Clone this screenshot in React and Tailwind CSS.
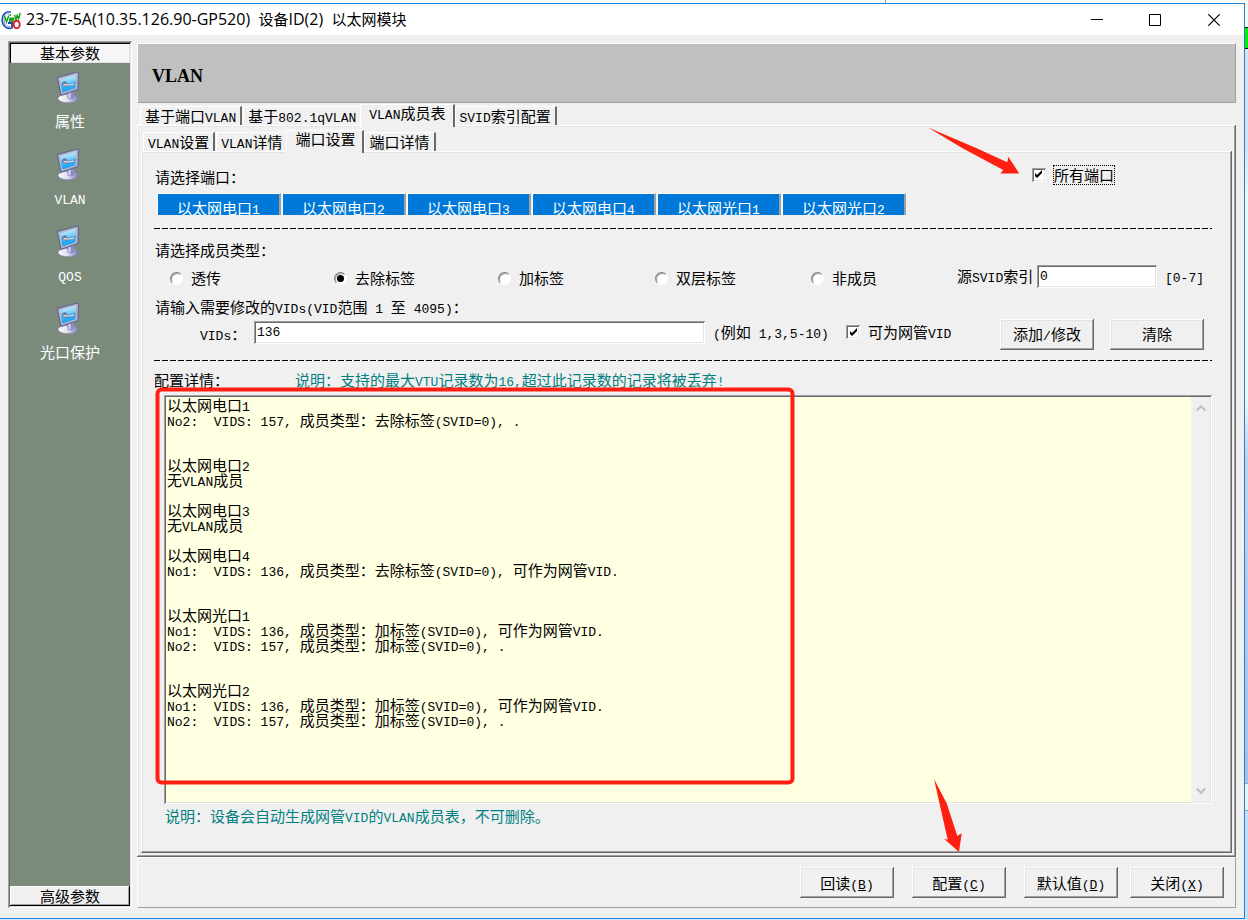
import React, { Fragment, useState } from "react";

/* Chinese glyphs are set at 15px; Latin runs use a narrower monospace size. */
function Mixed({ text, latin = "font-['Liberation_Mono',monospace] text-[13px] leading-none" }) {
  return (
    <>
      {text.split(/([\x20-\x7e]+)/).map((part, i) =>
        i % 2 ? (
          <span key={i} className={latin}>
            {part}
          </span>
        ) : (
          <Fragment key={i}>{part}</Fragment>
        )
      )}
    </>
  );
}

const raised =
  "bg-[#f0f0f0] shadow-[inset_-1px_-1px_#696969,inset_1px_1px_#fff,inset_-2px_-2px_#a0a0a0,inset_2px_2px_#e3e3e3]";
const sunken =
  "shadow-[inset_1px_1px_#a0a0a0,inset_-1px_-1px_#fff,inset_2px_2px_#696969,inset_-2px_-2px_#e3e3e3]";

function AppIcon() {
  return (
    <svg viewBox="0 0 20 20" className="h-5 w-5 shrink-0" fill="none" aria-hidden="true">
      <path d="M10 2.2C5 .6 1.2 4.500 1.200 10c0 5.600 4.200 9.200 9 8.200" stroke="#1d4fb8" strokeWidth="1.600" />
      <path d="M8 3.600C4.500 3.200 3 6.500 3 10c0 4 2.600 6.800 6 6.400" stroke="#6f93dc" strokeWidth="1" />
      <path d="M7 13h4v5.500" stroke="#1d3fa8" strokeWidth="1.800" />
      <path d="M3.500 6l2 6 2.300-6.500M9 7.500l-.3 4.500M9.800 10.500l3-1.300c-.6-2.200-3-1.200-2.800.8.2 1.800 2.200 1.600 3 .6M13.500 5l1.500 4.500 1.200-4 1.400 3.200L19.300 3" stroke="#18a018" strokeWidth="1.500" />
      <circle cx="9.300" cy="5" r=".9" fill="#18a018" />
      <ellipse cx="15.700" cy="14.500" rx="3" ry="3.800" stroke="#e01818" strokeWidth="1.900" />
    </svg>
  );
}

function MonitorIcon() {
  return (
    <svg viewBox="0 0 24 32" className="h-8 w-6" aria-hidden="true">
      <defs>
        <linearGradient id="screen" x1="0.300" y1="0" x2="0.500" y2="1">
          <stop offset="0" stopColor="#d4f4ff" />
          <stop offset=".4" stopColor="#7fd2fb" />
          <stop offset=".6" stopColor="#35b4fa" />
          <stop offset="1" stopColor="#1a9cf0" />
        </linearGradient>
        <linearGradient id="base" x1="0" y1="0" x2="1" y2="0">
          <stop offset="0" stopColor="#ffffff" />
          <stop offset=".5" stopColor="#dcdcee" />
          <stop offset="1" stopColor="#7c7cbc" />
        </linearGradient>
      </defs>
      <ellipse cx="12" cy="27.500" rx="10" ry="4.200" fill="url(#base)" stroke="#8484ae" strokeWidth=".7" />
      <path d="M11 21l7.500-2-.5 8c-1.500 1.800-5.500 1.800-6.500 0z" fill="#8c8cc8" />
      <path d="M12.500 21l2-.5v7l-2-.5z" fill="#d8d8f0" />
      <path d="M1.300 6.500L20.500 1.200q2-.3 2 1.300L22 18.500 5 24.200z" fill="#b4b6cc" stroke="#5f6290" strokeWidth="1.100" strokeLinejoin="round" />
      <path d="M4 8.200l15.800-4.400-.5 13.400L6.400 21.600z" fill="url(#screen)" />
      <path d="M5.500 13.200c1.200-4.200 6.500-3.400 5.500-.4 2.700.5 6.500-.5 9-2-1.200 4.500-11.500 7-14.500 2.400z" fill="#6f7a9c" />
      <path d="M7.500 13.200c2 1.400 7 1 10.500-.5" fill="none" stroke="#e6f2fc" strokeWidth="1.100" />
    </svg>
  );
}

const NAV = ["属性", "VLAN", "QOS", "光口保护"];

function Sidebar() {
  return (
    <aside className={`flex w-[124px] shrink-0 flex-col bg-[#7b8b7b] p-[2px] ${sunken}`}>
      <button className="h-5 bg-[#f6f6f6] leading-5 shadow-[inset_1px_1px_#000,inset_-1px_-1px_#e3e3e3]">基本参数</button>
      <nav className="flex flex-1 flex-col pt-2">
        {NAV.map((n) => (
          <a key={n} href="#" className="flex h-[77px] flex-col items-center text-white">
            <span className="pr-1">
              <MonitorIcon />
            </span>
            <span className="pt-2 leading-5">
              <Mixed text={n} />
            </span>
          </a>
        ))}
      </nav>
      <button className="h-5 bg-[#f0f0f0] leading-5 shadow-[inset_-1px_-1px_#000,inset_1px_1px_#fff,inset_-2px_-2px_#a0a0a0]">
        高级参数
      </button>
    </aside>
  );
}

function Tabs({ items, active, label }) {
  return (
    <div role="tablist" aria-label={label} className="flex items-end">
      {items.map((t, i) =>
        i === active ? (
          <button
            key={t}
            role="tab"
            aria-selected="true"
            className="relative z-10 -mb-[2px] h-[23px] border-t border-r-2 border-l border-t-white border-r-[#696969] border-l-white bg-[#f0f0f0] pr-[7px] pb-[6px] pl-2 leading-4"
          >
            <Mixed text={t} />
          </button>
        ) : (
          <button
            key={t}
            role="tab"
            aria-selected="false"
            className={
              i === active - 1
                ? "h-[19px] border-t border-l border-white px-1 leading-4"
                : "mr-px h-[19px] border-t border-r-2 border-l border-t-white border-r-[#696969] border-l-white px-1 leading-4"
            }
          >
            <Mixed text={t} />
          </button>
        )
      )}
    </div>
  );
}

function Dashes() {
  return <div className="h-px bg-[repeating-linear-gradient(90deg,#000_0_6px,transparent_6px_8px)]" />;
}

function Check({ id, label, focused }) {
  const [on, setOn] = useState(true);
  return (
    <div className="flex items-center gap-[7px]">
      <span className="grid h-[14px] w-[14px] place-items-center">
        <input
          id={id}
          type="checkbox"
          checked={on}
          onChange={(e) => setOn(e.target.checked)}
          className={`peer col-start-1 row-start-1 h-[14px] w-[14px] appearance-none bg-white ${sunken}`}
        />
        <svg viewBox="0 0 9 9" className="pointer-events-none invisible col-start-1 row-start-1 h-[9px] w-[9px] peer-checked:visible">
          <path d="M1 3v3l2 2 5-5V0L3 5z" fill="#000" />
        </svg>
      </span>
      <label htmlFor={id} className={focused ? "border border-dotted border-black leading-[18px]" : "px-px leading-5"}>
        <Mixed text={label} />
      </label>
    </div>
  );
}

function Radio({ label, defaultChecked }) {
  return (
    <label className="flex items-center gap-2">
      <span className="grid h-[13px] w-[13px] place-items-center">
        <input
          type="radio"
          name="memberType"
          defaultChecked={defaultChecked}
          className="peer col-start-1 row-start-1 h-[13px] w-[13px] appearance-none rounded-full border border-t-[#808080] border-r-white border-b-white border-l-[#808080] bg-white shadow-[inset_1px_1px_#a0a0a0]"
        />
        <span className="pointer-events-none invisible col-start-1 row-start-1 h-[7px] w-[7px] rounded-full bg-black peer-checked:visible" />
      </span>
      {label}
    </label>
  );
}

function PushButton({ children }) {
  return <button className={`h-[31px] w-[94px] leading-5 ${raised}`}>{children}</button>;
}

const PORTS = ["以太网电口1", "以太网电口2", "以太网电口3", "以太网电口4", "以太网光口1", "以太网光口2"];

const LOG = [
  "以太网电口1",
  "No2:  VIDS: 157, 成员类型：去除标签(SVID=0), .",
  "",
  "",
  "以太网电口2",
  "无VLAN成员",
  "",
  "以太网电口3",
  "无VLAN成员",
  "",
  "以太网电口4",
  "No1:  VIDS: 136, 成员类型：去除标签(SVID=0), 可作为网管VID.",
  "",
  "",
  "以太网光口1",
  "No1:  VIDS: 136, 成员类型：加标签(SVID=0), 可作为网管VID.",
  "No2:  VIDS: 157, 成员类型：加标签(SVID=0), .",
  "",
  "",
  "以太网光口2",
  "No1:  VIDS: 136, 成员类型：加标签(SVID=0), 可作为网管VID.",
  "No2:  VIDS: 157, 成员类型：加标签(SVID=0), .",
];

function PortSettings() {
  return (
    <div className={`flex flex-1 flex-col pt-[2px] pr-5 pb-[25px] pl-[13px] ${raised}`}>
      <div className="flex h-10 items-center justify-between pt-[3px] pr-[97px] pl-px">
        <span className="pt-1">请选择端口：</span>
        <Check id="allPorts" label="所有端口" focused />
      </div>
      <div className="flex gap-px pl-[3px]">
        {PORTS.map((p) => (
          <button
            key={p}
            aria-pressed="true"
            className="h-[22px] w-[124px] overflow-hidden border-t border-r-2 border-l border-t-white border-r-[#a0a0a0] border-l-white bg-[#0078d7] pt-1 leading-5 text-white"
          >
            <Mixed text={p} />
          </button>
        ))}
      </div>
      <div className="pt-[13px]">
        <Dashes />
      </div>
      <div className="pt-[10px] pl-px leading-[22px]">请选择成员类型：</div>
      <div className="grid h-[34px] grid-cols-[164fr_164fr_157fr_156fr_146fr_255fr] items-center pl-4">
        <Radio label="透传" />
        <Radio label="去除标签" defaultChecked />
        <Radio label="加标签" />
        <Radio label="双层标签" />
        <Radio label="非成员" />
        <div className="flex items-center pb-1">
          <label htmlFor="svid" className="w-20 shrink-0">
            <Mixed text="源SVID索引" />
          </label>
          <input
            id="svid"
            defaultValue="0"
            className={`h-[23px] w-[120px] bg-white px-[3px] font-['Liberation_Mono',monospace] text-[13px] ${sunken}`}
          />
          <span className="pl-2">
            <Mixed text="[0-7]" />
          </span>
        </div>
      </div>
      <div className="h-[23px] pl-px leading-[23px]">
        <Mixed text="请输入需要修改的VIDs(VID范围 1 至 4095)：" />
      </div>
      <div className="flex h-8 items-center pr-2 pl-[46px]">
        <label htmlFor="vids" className="w-[54px] shrink-0">
          <Mixed text="VIDs：" />
        </label>
        <div className="flex flex-1 items-center pb-1">
          <input
            id="vids"
            defaultValue="136"
            className={`h-[23px] min-w-0 flex-1 bg-white px-[3px] font-['Liberation_Mono',monospace] text-[13px] ${sunken}`}
          />
          <span className="w-[141px] shrink-0 pl-2">
            <Mixed text="(例如 1,3,5-10)" />
          </span>
          <div className="w-[154px] shrink-0">
            <Check id="mgmtVid" label="可为网管VID" />
          </div>
        </div>
        <div className="flex gap-4">
          <PushButton>
            <Mixed text="添加/修改" />
          </PushButton>
          <PushButton>清除</PushButton>
        </div>
      </div>
      <div className="pt-[10px]">
        <Dashes />
      </div>
      <div className="flex h-[34px] items-center pt-1">
        <h2 id="logTitle" className="w-[141px]">
          配置详情：
        </h2>
        <p className="text-[#008080]">
          <Mixed text="说明：支持的最大VTU记录数为16,超过此记录数的记录将被丢弃!" />
        </p>
      </div>
      <div className={`ml-[10px] flex min-h-[340px] flex-1 bg-[#ffffe1] p-[2px] ${sunken}`}>
        <div role="log" aria-labelledby="logTitle" className="flex-1 px-px">
          {LOG.map((line, i) => (
            <div key={i} className="h-[15px] leading-[15px]">
              <Mixed text={line} />
            </div>
          ))}
        </div>
        <div className="flex w-[19px] flex-col justify-between bg-[#f0f0f0] py-[6px] text-[#bfbfbf]">
          <button aria-label="向上滚动" className="flex justify-center">
            <svg viewBox="0 0 10 10" className="h-[10px] w-[10px]" fill="none" stroke="currentColor" strokeWidth="2">
              <path d="M.7 7.500L5 3.200l4.300 4.300" />
            </svg>
          </button>
          <button aria-label="向下滚动" className="flex justify-center">
            <svg viewBox="0 0 10 10" className="h-[10px] w-[10px]" fill="none" stroke="currentColor" strokeWidth="2">
              <path d="M.7 2.500L5 6.800l4.300-4.300" />
            </svg>
          </button>
        </div>
      </div>
      <p className="pl-[11px] leading-6 text-[#008080]">
        <Mixed text="说明：设备会自动生成网管VID的VLAN成员表，不可删除。" />
      </p>
    </div>
  );
}

function Action({ name, mnemonic }) {
  return (
    <PushButton>
      {name}
      <span className="font-['Liberation_Mono',monospace] text-[13px] leading-none">
        (<u>{mnemonic}</u>)
      </span>
    </PushButton>
  );
}

function Annotations() {
  return (
    <svg
      width="1248"
      height="920"
      viewBox="0 0 1248 920"
      className="pointer-events-none absolute top-0 left-0 z-20"
      fill="#ff2012"
      aria-hidden="true"
    >
      <rect x="157.500" y="389.500" width="635" height="393" rx="4" fill="none" stroke="#ff2012" strokeWidth="4" />
      <path d="M928 127.500L975 147.500 1007.300 162.300 1008.300 156.700 1019.300 173.500H1000.300L1003.300 170 963 148.500z" />
      <path d="M934 779L946.700 803.300 957.300 836 961.700 833.300 959 852 944 838.700 947.700 839.700z" />
    </svg>
  );
}

export default function App() {
  return (
    <div className="relative flex min-h-screen flex-col bg-[#d3e6fb] font-['Noto_Sans_CJK_SC',sans-serif] text-[15px] leading-5 whitespace-pre text-black">
      <div className="flex h-[3px] bg-white">
        <div className="w-[71%] border-r border-[#a0a0a0]" />
      </div>
      <div className="flex flex-1">
        <div className="flex flex-1 flex-col border-t border-r border-b border-[#1883d7] bg-[#f0f0f0]">
          <header className="flex h-[31px] items-center bg-white pl-px">
            <AppIcon />
            <h1 className="flex-1 pb-px pl-[5px] font-['Open_Sans','Noto_Sans_CJK_SC',sans-serif]">
              <Mixed text="23-7E-5A(10.35.126.90-GP520)  设备ID(2)  以太网模块" latin="text-[16px]" />
            </h1>
            <div className="flex">
              <button aria-label="最小化" className="grid h-[30px] w-[58px] place-items-center">
                <svg viewBox="0 0 12 12" className="h-3 w-3" stroke="#000" fill="none">
                  <path d="M0 5.500h12" />
                </svg>
              </button>
              <button aria-label="最大化" className="grid h-[30px] w-[58px] place-items-center">
                <svg viewBox="0 0 12 12" className="h-3 w-3" stroke="#000" fill="none">
                  <path d="M.5.5h11v11H.5z" />
                </svg>
              </button>
              <button aria-label="关闭" className="grid h-[30px] w-[60px] place-items-center">
                <svg viewBox="0 0 12 12" className="h-3 w-3" stroke="#000" strokeWidth="1.200" fill="none">
                  <path d="M.3.3l11.400 11.400M11.700.3L.3 11.700" />
                </svg>
              </button>
            </div>
          </header>
          <div className="flex flex-1 gap-[5px] pt-[6px] pr-2 pb-[10px] pl-2">
            <Sidebar />
            <main className="flex min-w-0 flex-1 flex-col pt-[2px]">
              <div className="flex h-[60px] items-center border-t border-r border-b border-l border-t-white border-r-[#a0a0a0] border-b-[#a0a0a0] border-l-white bg-[#c0c0c0] px-[14px] pt-[6px]">
                <h2 className="font-['Liberation_Serif',serif] text-lg font-bold">VLAN</h2>
              </div>
              <div className="pt-px pl-[3px]">
                <Tabs label="VLAN" active={2} items={["基于端口VLAN", "基于802.1qVLAN", "VLAN成员表", "SVID索引配置"]} />
              </div>
              <div className={`flex flex-1 flex-col px-1 pt-[5px] pb-1 ${raised}`}>
                <div className="pl-[2px]">
                  <Tabs label="VLAN成员表" active={2} items={["VLAN设置", "VLAN详情", "端口设置", "端口详情"]} />
                </div>
                <PortSettings />
              </div>
              <footer className="flex h-[51px] items-center justify-end border-t border-r border-b border-l border-t-white border-r-[#a0a0a0] border-b-[#a0a0a0] border-l-white pr-[11px]">
                <div className="flex gap-[18px] pr-3">
                  <Action name="回读" mnemonic="B" />
                  <Action name="配置" mnemonic="C" />
                  <Action name="默认值" mnemonic="D" />
                </div>
                <Action name="关闭" mnemonic="X" />
              </footer>
            </main>
          </div>
        </div>
        <div className="flex w-[3px] flex-col">
          <div className="h-6 bg-white" />
          <div className="h-[22px] border-y border-black bg-[#00f000]" />
          <div className="flex-1 bg-[linear-gradient(#dbe3f1_0,#dbe3f1_14%,#f4f6fa_20%,#f4f6fa_48%,#c5d3ea_55%,#a9c1e6_100%)]" />
          <div className="h-7 border-y border-[#a0a0a0] bg-[#f0f0f0]" />
          <div className="h-[108px] bg-[#c5dcfb]" />
        </div>
      </div>
      <div className="h-px" />
      <Annotations />
    </div>
  );
}
